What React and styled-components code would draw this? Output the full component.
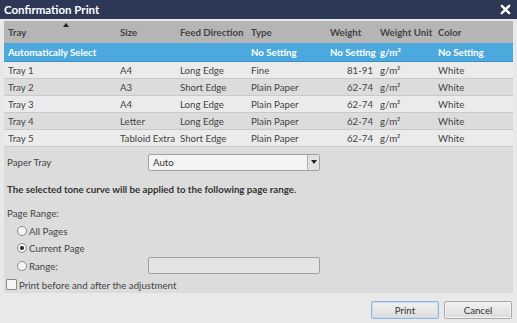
import React from "react";
import styled, { createGlobalStyle } from "styled-components";

const Global = createGlobalStyle`
  html, body { margin: 0; padding: 0; }
  body {
    width: 517px;
    height: 323px;
    overflow: hidden;
    background: #e9e9e9;
    font-family: Lato, "Open Sans", "Liberation Sans", sans-serif;
    font-size: 9.7px;
    color: #333;
  }
`;

const Dialog = styled.div`
  width: 517px;
  height: 323px;
  display: flex;
  flex-direction: column;
  background: #e9e9e9;
`;

const TitleBar = styled.div`
  height: 19px;
  background: #2c3856;
  display: flex;
  align-items: center;
  justify-content: space-between;
  padding: 0 6px 0 4px;
  color: #fff;
  font-size: 11.5px;
  font-weight: 700;
  flex-shrink: 0;
`;

const Close = styled.svg`
  width: 11px;
  height: 11px;
`;

const Panel = styled.div`
  margin: 2px 4px 0 4px;
  background: #dcdcdc;
  height: 272px;
  display: flex;
  flex-direction: column;
`;

const Table = styled.div`
  display: flex;
  flex-direction: column;
`;

const cols = "112px 60px 71px 79px 50px 58px 1fr";

const HeaderRow = styled.div`
  display: grid;
  grid-template-columns: ${cols};
  height: 22px;
  align-items: center;
  background: #b5b5b5;
  font-weight: 700;
  color: #444;
  padding-left: 4px;
  position: relative;
`;

const SortArrow = styled.div`
  position: absolute;
  left: 59px;
  top: 2px;
  width: 0;
  height: 0;
  border-left: 3px solid transparent;
  border-right: 3px solid transparent;
  border-bottom: 4px solid #222;
`;

const Row = styled.div`
  display: grid;
  grid-template-columns: ${cols};
  box-sizing: border-box;
  height: ${(p) => (p.$selected ? "19px" : "17px")};
  align-items: center;
  padding-left: 4px;
  background: ${(p) => (p.$selected ? "#4ca9de" : p.$alt ? "#dcdcdc" : "#ebebeb")};
  color: ${(p) => (p.$selected ? "#fff" : "#444")};
  font-weight: ${(p) => (p.$selected ? 700 : 400)};
  border-bottom: 1px solid ${(p) => (p.$selected ? "#3a8fc4" : "#c9c9c9")};
`;

const Cell = styled.div`
  white-space: nowrap;
  overflow: hidden;
  text-align: ${(p) => (p.$right ? "right" : "left")};
  padding-right: ${(p) => (p.$right ? "7px" : "0")};
`;

const Form = styled.div`
  padding: 6px 0 0 3px;
  display: flex;
  flex-direction: column;
  color: #444;
`;

const FieldRow = styled.div`
  display: grid;
  grid-template-columns: 141px 172px;
  align-items: center;
  height: ${(p) => p.$h || "18px"};
`;

const Select = styled.div`
  height: 17px;
  box-sizing: border-box;
  border: 1px solid #a0a0a0;
  border-radius: 2px;
  background: #f4f4f4;
  display: flex;
  align-items: center;
  padding-left: 4px;
  color: #333;
`;

const SelectText = styled.span`
  flex: 1;
`;

const SelectButton = styled.div`
  width: 11px;
  height: 15px;
  border-left: 1px solid #b0b0b0;
  display: flex;
  align-items: center;
  justify-content: center;
  background: #e2e2e2;
  &::after {
    content: "";
    border-left: 3px solid transparent;
    border-right: 3px solid transparent;
    border-top: 4px solid #222;
  }
`;

const Note = styled.div`
  font-weight: 700;
  color: #333;
  height: 18px;
  margin-top: 9px;
  display: flex;
  align-items: center;
`;

const Label = styled.div`
  height: 18px;
  margin-top: 6px;
  display: flex;
  align-items: center;
`;

const RadioLabel = styled.label`
  display: flex;
  align-items: center;
  gap: 2px;
  padding-left: 10px;
`;

const RadioDot = styled.span`
  width: 10px;
  height: 10px;
  box-sizing: border-box;
  border-radius: 50%;
  border: 1px solid #8a8a8a;
  background: #f6f6f6;
  display: flex;
  align-items: center;
  justify-content: center;
  &::after {
    content: "";
    width: 4px;
    height: 4px;
    border-radius: 50%;
    background: ${(p) => (p.$on ? "#222" : "transparent")};
  }
`;

const Input = styled.div`
  height: 17px;
  box-sizing: border-box;
  border: 1px solid #a0a0a0;
  border-radius: 2px;
  background: #e4e4e4;
`;

const CheckRow = styled.label`
  display: flex;
  align-items: center;
  gap: 2px;
  height: 14px;
  margin-top: 3px;
  margin-left: -1px;
`;

const Box = styled.span`
  width: 9px;
  height: 9px;
  border: 1px solid #8a8a8a;
  border-radius: 1px;
  background: #f6f6f6;
`;

const Footer = styled.div`
  flex: 1;
  display: flex;
  justify-content: flex-end;
  align-items: center;
  gap: 5px;
  padding: 0 5px 0 0;
`;

const Button = styled.div`
  width: 68px;
  height: 18px;
  box-sizing: border-box;
  border: 1px solid ${(p) => (p.$primary ? "#8fb3de" : "#a8a8a8")};
  box-shadow: ${(p) => (p.$primary ? "inset 0 0 0 1px #c9dcf2" : "inset 0 0 0 1px #f4f4f4")};
  border-radius: 2px;
  background: linear-gradient(#f1f1f1, #dcdcdc);
  display: flex;
  align-items: center;
  justify-content: center;
  color: #333;
  margin-top: 4px;
`;

const rows = [
  ["Tray 1", "A4", "Long Edge", "Fine", "81-91"],
  ["Tray 2", "A3", "Short Edge", "Plain Paper", "62-74"],
  ["Tray 3", "A4", "Long Edge", "Plain Paper", "62-74"],
  ["Tray 4", "Letter", "Long Edge", "Plain Paper", "62-74"],
  ["Tray 5", "Tabloid Extra", "Short Edge", "Plain Paper", "62-74"],
];

export default function App() {
  return (
    <>
      <Global />
      <Dialog>
        <TitleBar>
          <span>Confirmation Print</span>
          <Close viewBox="0 0 12 12">
            <path d="M2 2 L10 10 M10 2 L2 10" stroke="#fff" strokeWidth="2.6" strokeLinecap="round" />
          </Close>
        </TitleBar>
        <Panel>
          <Table>
            <HeaderRow>
              <SortArrow />
              <Cell>Tray</Cell>
              <Cell>Size</Cell>
              <Cell>Feed Direction</Cell>
              <Cell>Type</Cell>
              <Cell>Weight</Cell>
              <Cell>Weight Unit</Cell>
              <Cell>Color</Cell>
            </HeaderRow>
            <Row $selected>
              <Cell>Automatically Select</Cell>
              <Cell />
              <Cell />
              <Cell>No Setting</Cell>
              <Cell $right>No Setting</Cell>
              <Cell>g/m²</Cell>
              <Cell>No Setting</Cell>
            </Row>
            {rows.map((r, i) => (
              <Row key={r[0]} $alt={i % 2 === 1}>
                <Cell>{r[0]}</Cell>
                <Cell>{r[1]}</Cell>
                <Cell>{r[2]}</Cell>
                <Cell>{r[3]}</Cell>
                <Cell $right>{r[4]}</Cell>
                <Cell>g/m²</Cell>
                <Cell>White</Cell>
              </Row>
            ))}
          </Table>
          <Form>
            <FieldRow>
              <span>Paper Tray</span>
              <Select>
                <SelectText>Auto</SelectText>
                <SelectButton />
              </Select>
            </FieldRow>
            <Note>The selected tone curve will be applied to the following page range.</Note>
            <Label>Page Range:</Label>
            <FieldRow $h="17.5px">
              <RadioLabel>
                <RadioDot />
                All Pages
              </RadioLabel>
            </FieldRow>
            <FieldRow $h="17.5px">
              <RadioLabel>
                <RadioDot $on />
                Current Page
              </RadioLabel>
            </FieldRow>
            <FieldRow $h="17.5px">
              <RadioLabel>
                <RadioDot />
                Range:
              </RadioLabel>
              <Input />
            </FieldRow>
            <CheckRow>
              <Box />
              Print before and after the adjustment
            </CheckRow>
          </Form>
        </Panel>
        <Footer>
          <Button $primary>Print</Button>
          <Button>Cancel</Button>
        </Footer>
      </Dialog>
    </>
  );
}
